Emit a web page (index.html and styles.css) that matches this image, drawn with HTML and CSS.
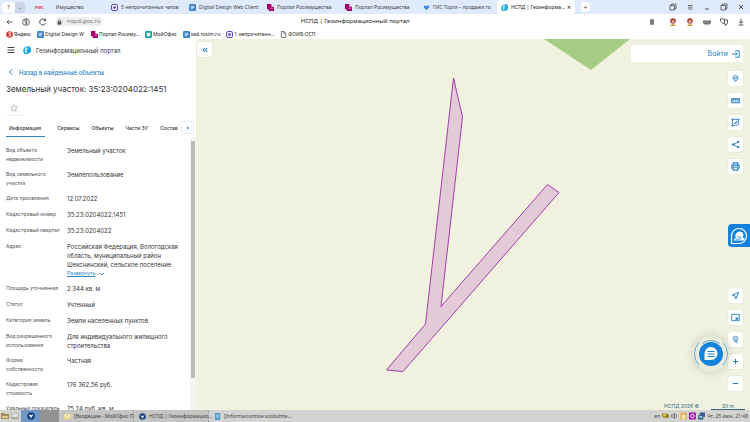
FILE: index.html
```html
<!DOCTYPE html>
<html lang="ru">
<head>
<meta charset="utf-8">
<title>НСПД | Геоинформационный портал</title>
<link rel="stylesheet" href="styles.css">
</head>
<body>
<svg class="defs" aria-hidden="true">
  <symbol id="purple" viewBox="0 0 8 8"><path fill="#a3006b" d="M0 0h5v3h3v5H2V6H0z"/><path fill="#d54b9b" d="M4 4h3v2H4z"/></symbol>
  <symbol id="doc" viewBox="0 0 8 8"><rect width="8" height="8" rx="1.5" fill="#3d82cf"/><path d="M2 2.5h4M2 4h4M2 5.5h3" stroke="#fff" stroke-width=".8"/></symbol>
  <symbol id="mail" viewBox="0 0 8 8"><rect x=".6" y=".6" width="6.8" height="6.8" rx="2" fill="#fff" stroke="#5b3fd0" stroke-width="1.2"/><circle cx="4" cy="4" r="1.5" fill="#4438d4"/></symbol>
  <symbol id="portal" viewBox="0 0 8 8"><path fill="#25a9dc" d="M2 1 6 0l2 2v4L5 8H1L0 4z"/><path fill="#a8e7f2" d="m2 2 3-.7L4 4v3H2z"/></symbol>
  <symbol id="person" viewBox="0 0 8 8"><circle cx="4" cy="3" r="2.8" fill="#a33a34"/><circle cx="4" cy="3.6" r="1.5" fill="#e5b18c"/><path d="M1 8q3-4 6 0z" fill="#c39a4b"/></symbol>
  <symbol id="windows" viewBox="0 0 8 8"><path d="M1 2.5h4.5V7H1zM2.5 2.5V1H7v4.5H5.5" fill="none" stroke="#333" stroke-width=".7"/></symbol>
  <symbol id="bird" viewBox="0 0 8 8"><circle cx="4" cy="4" r="3.8" fill="#173e7e"/><path d="M1.5 2.5 4 3.3l2.5-.8L4.6 5 4 6.8 3.4 5z" fill="#fff"/></symbol>
</svg>

<header class="browser">
  <nav class="tabs" aria-label="Вкладки">
    <div class="pins"><button class="pin">7</button><button class="pin-more">⌄</button></div>
    <a class="tab first" href="#"><b class="pmc">РМС</b><span>Имущество</span></a>
    <a class="tab" href="#"><svg><use href="#mail"/></svg><span>5 непрочитанных чатов</span></a>
    <a class="tab" href="#"><svg><use href="#doc"/></svg><span>Digital Design Web Client</span></a>
    <a class="tab" href="#"><svg><use href="#purple"/></svg><span>Портал Росимущества</span></a>
    <a class="tab" href="#"><svg><use href="#purple"/></svg><span>Портал Росимущества</span></a>
    <a class="tab" href="#"><svg viewBox="0 0 8 8"><path d="M1 2h6v2L4 7 1 4z" fill="#4b88dc"/></svg><span>ГИС Торги – продажи го</span></a>
    <a class="tab active" href="#"><svg><use href="#portal"/></svg><span>НСПД | Геоинформа...</span><i>×</i></a>
    <button class="plus" aria-label="Новая вкладка">+</button>
    <div class="window-actions">
      <button aria-label="Окна"><svg><use href="#windows"/></svg></button>
      <button aria-label="Меню"><svg viewBox="0 0 8 8"><path d="M2 2.5h4.5M2 4.2h4.5M2 6h4.5" stroke="#444" stroke-width=".7"/></svg></button>
      <button aria-label="Свернуть"><svg viewBox="0 0 8 8"><path d="M2 6h4" stroke="#333" stroke-width=".8"/></svg></button>
      <button aria-label="Развернуть окно"><svg><use href="#windows"/></svg></button>
      <button aria-label="Закрыть"><svg viewBox="0 0 8 8"><path d="m2 2 4 4m0-4L2 6" stroke="#222" stroke-width=".8"/></svg></button>
    </div>
  </nav>
  <div class="address-bar">
    <div class="nav-buttons">
      <button aria-label="Назад"><svg viewBox="0 0 8 8"><path d="M7.5 4H2m2-2L2 4l2 2" fill="none" stroke="#333" stroke-width=".8"/></svg></button>
      <button aria-label="Яндекс"><svg viewBox="0 0 8 8"><circle cx="4" cy="4" r="3.4" fill="none" stroke="#333" stroke-width=".7"/><path d="M4.7 6.5v-5q-2-.1-2 1.4 0 1.3 2 1.4L3 6.5" fill="none" stroke="#333" stroke-width=".7"/></svg></button>
      <button aria-label="Обновить"><svg viewBox="0 0 8 8"><path d="M6.5 5.2a3 3 0 1 1-.3-3M6.500.7v2H4.600" fill="none" stroke="#333" stroke-width=".9"/></svg></button>
    </div>
    <div class="url"><svg viewBox="0 0 8 8"><rect x="1.5" y="3.5" width="5" height="4" fill="#555"/><path d="M2.600 4V2.500a1.400 1.400 0 0 1 2.800 0V4" fill="none" stroke="#555"/></svg><span>nspd.gov.ru</span></div>
    <h1>НСПД | Геоинформационный портал</h1>
    <div class="extensions">
      <button aria-label="Закладка"><svg viewBox="0 0 8 8"><path d="M2 1.500h4V6.500H2z" fill="#999"/><path d="M2 2h4M2 4h4M2 6h4" stroke="#555" stroke-width=".8"/></svg></button>
      <button aria-label="Профиль 1"><svg><use href="#person"/></svg></button>
      <button aria-label="Профиль 2"><svg><use href="#person"/></svg></button>
      <button aria-label="Расширение"><svg viewBox="0 0 8 8"><path d="M0 2.500h8v2.300L6.500 6.500h-5L0 4.800z" fill="#6d6d74"/><path d="M1 4.500h6" stroke="#aaa" stroke-width=".7"/></svg></button>
      <button aria-label="Переводчик"><svg viewBox="0 0 8 8"><path d="M.5 1h4v5l-2-1-2-2zM4.500 2h3v3l-2 2.500V6" fill="none" stroke="#333" stroke-width=".8"/></svg></button>
      <button aria-label="Загрузки"><svg viewBox="0 0 8 8"><path d="M4 1v4M2 3.500l2 2 2-2M1.800 7h4.500" fill="none" stroke="#333" stroke-width=".9"/></svg></button>
    </div>
  </div>
  <nav class="bookmarks" aria-label="Закладки">
    <a href="#"><svg viewBox="0 0 8 8"><circle cx="4" cy="4" r="3.8" fill="#e3352e"/><path d="M5 6.500v-5q-2-.1-2 1.400 0 1.300 2 1.400L3 6.500" fill="none" stroke="#fff" stroke-width=".8"/></svg><span>Яндекс</span></a>
    <a class="wide" href="#"><svg><use href="#doc"/></svg><span>Digital Design W</span></a>
    <a class="wide" href="#"><svg><use href="#purple"/></svg><span>Портал Росиму...</span></a>
    <a href="#"><svg viewBox="0 0 8 8"><rect width="8" height="8" rx="1.5" fill="#16a3a2"/><path d="M2 2h4v4H2z" fill="#fff"/></svg><span>МойОфис</span></a>
    <a href="#"><svg><use href="#doc"/></svg><span>sed.rosim.ru</span></a>
    <a class="wide" href="#"><svg><use href="#mail"/></svg><span>1 непрочитанн...</span></a>
    <a href="#"><svg viewBox="0 0 8 8"><path d="M1.500.6h3l2 2v4.800h-5zM4.500.6v2h2" fill="none" stroke="#444" stroke-width=".8"/></svg><span>ФОИВ-ОСП</span></a>
  </nav>
</header>

<main class="workspace">
  <aside class="panel">
    <div class="brand">
      <button aria-label="Меню портала"><svg viewBox="0 0 8 8"><path d="M.5 1.500h7M.5 4h7M.5 6.500h7" stroke="#444"/></svg></button>
      <svg><use href="#portal"/></svg><span>Геоинформационный портал</span>
    </div>
    <a class="back" href="#"><svg viewBox="0 0 8 8"><path d="M5 1.500 2.500 4 5 6.500" fill="none" stroke="#2985c7"/></svg>Назад в найденные объекты</a>
    <h2>Земельный участок: 35:23:0204022:1451</h2>
    <button class="star" aria-label="В избранное"><svg viewBox="0 0 8 8"><path d="m4 .8 1 2.200 2.400.2-1.800 1.600.5 2.400L4 6 1.900 7.200l.5-2.400L.6 3.200 3 3z" fill="none" stroke="#999" stroke-width=".6"/></svg></button>
    <div class="section-tabs">
      <nav aria-label="Разделы"><a class="current" href="#">Информация</a><a href="#">Сервисы</a><a href="#">Объекты</a><a href="#">Части ЗУ</a><a href="#">Состав</a></nav>
      <button aria-label="Далее"><svg viewBox="0 0 8 8"><path d="M3 2.500 5 4 3 5.500z" fill="#2985c7"/></svg></button>
    </div>
    <div class="details">
      <dl>
        <div><dt>Вид объекта недвижимости</dt><dd>Земельный участок</dd></div>
        <div><dt>Вид земельного участка</dt><dd>Землепользование</dd></div>
        <div><dt>Дата присвоения</dt><dd>12.07.2022</dd></div>
        <div><dt>Кадастровый номер</dt><dd>35:23:0204022:1451</dd></div>
        <div><dt>Кадастровый квартал</dt><dd>35:23:0204022</dd></div>
        <div><dt>Адрес</dt><dd>Российская Федерация, Вологодская область, муниципальный район Шекснинский, сельское поселение<a class="expand" href="#">Развернуть<svg viewBox="0 0 8 8"><path d="m2 3 2 2 2-2" fill="none" stroke="#2985c7"/></svg></a></dd></div>
        <div><dt>Площадь уточненная</dt><dd>2 344 кв. м</dd></div>
        <div><dt>Статус</dt><dd>Учтенный</dd></div>
        <div><dt>Категория земель</dt><dd>Земли населенных пунктов</dd></div>
        <div><dt>Вид разрешенного использования</dt><dd>Для индивидуального жилищного строительства</dd></div>
        <div><dt>Форма собственности</dt><dd>Частная</dd></div>
        <div><dt>Кадастровая стоимость</dt><dd>176 362,56 руб.</dd></div>
        <div><dt>Удельный показатель</dt><dd>75,24 руб./кв. м</dd></div>
      </dl>
      <div class="scroll"><i></i></div>
    </div>
  </aside>
  <section class="map" aria-label="Карта">
    <svg class="canvas" viewBox="196 39 554 371" preserveAspectRatio="xMidYMid slice">
      <path d="M544 39h86l-39 31z" fill="#a5cd83"/>
      <path d="M453.500 78 462.500 117 441 306.500 547.500 184.500 559 192.500 403 371.500 386.500 370 425.500 324z" fill="#e3cad7" stroke="#a43eaa" stroke-linejoin="round"/>
    </svg>
    <button class="collapse" aria-label="Свернуть панель"><svg viewBox="0 0 8 8"><path d="M3.800 2 2 4l1.800 2M6.300 2 4.500 4l1.800 2" fill="none" stroke="#2380c3" stroke-width="1.100"/></svg></button>
    <div class="login"><a href="#">Войти<svg viewBox="0 0 10 10"><path d="M4 1h5v8H4M0 5h6.500M4.500 3l2 2-2 2" fill="none" stroke="#2380c3" stroke-width="1.200"/></svg></a></div>
    <div class="tools top">
      <button aria-label="Слои"><svg viewBox="0 0 10 10"><path d="m5 1.500 2.500 1.500v2.500L5 8.500 2.500 5.500V3z" fill="#c7e0f2" stroke="#3187c5" stroke-width=".9"/><path d="m2.500 3.500 2.500 1.500 2.500-1.500" fill="none" stroke="#3187c5" stroke-width=".8"/></svg></button>
      <button aria-label="Линейка"><svg viewBox="0 0 10 10"><path d="M.8 3h8.400v4.500H.8zM2.800 3v2M5 3v2M7.200 3v2" fill="#c7e0f2" stroke="#287fbe" stroke-width="1.200"/></svg></button>
      <button aria-label="Выделение"><svg viewBox="0 0 10 10"><path d="M1.500.5v9M.5 1.500h9M8.500.5V5M.5 8.500H5M3 7l4-4" fill="none" stroke="#287fbe"/><circle cx="7" cy="6.500" r="1.700" fill="#fff" stroke="#287fbe" stroke-width=".8"/></svg></button>
      <button aria-label="Поделиться"><svg viewBox="0 0 10 10"><path d="M8 2 2.500 5 8 8" fill="none" stroke="#287fbe"/><g fill="#287fbe"><circle cx="8" cy="2" r="1.200"/><circle cx="2.500" cy="5" r="1.300"/><circle cx="8" cy="8" r="1.200"/></g></svg></button>
      <button aria-label="Печать"><svg viewBox="0 0 10 10"><path d="M2.500 3.500V1h5v2.500M2.500 7H1V3.500h8V7H7.500M2.500 5.500h5V9h-5z" fill="none" stroke="#287fbe" stroke-width="1.200"/></svg></button>
    </div>
    <button class="assistant" aria-label="Помощник"><svg viewBox="0 0 18 18"><path d="M1.500 16.500V9A7.500 7.500 0 1 1 9 16.500z" fill="none" stroke="#fff" stroke-width="1.200"/><path d="M3.500 13.500q.5-2 2.500-3L5 8.500 6.500 6q3-2.500 6-.5l1 2.500-.8 2 2.300 2-1.500 1.500z" fill="#fff"/><path d="M7 9q2 2 4 1M5.500 12q3 1 6-.5" fill="none" stroke="#1480df" stroke-width=".8"/></svg></button>
    <div class="tools bottom">
      <button aria-label="Местоположение"><svg viewBox="0 0 10 10"><path d="M1.500 4.500 8.500 1.500l-3 7-1.200-2.800z" fill="none" stroke="#287fbe" stroke-width="1.100"/></svg></button>
      <button aria-label="Обзорная карта"><svg viewBox="0 0 10 10"><path d="M.8 1.500h8.400v7H.8z" fill="none" stroke="#287fbe"/><path d="M5 5h3v2.500H5z" fill="#287fbe"/></svg></button>
      <button aria-label="Точка"><svg viewBox="0 0 10 10"><circle cx="5" cy="4" r="2.600" fill="#c7e0f2" stroke="#4c8fc0" stroke-width=".9"/><path d="M3.500 6.500 7 9M5 4l2 4" stroke="#4c8fc0"/></svg></button>
      <button aria-label="Увеличить"><svg viewBox="0 0 10 10"><path d="M5 2v6M2 5h6" stroke="#287fbe" stroke-width="1.100"/></svg></button>
      <button aria-label="Уменьшить"><svg viewBox="0 0 10 10"><path d="M2 5h6" stroke="#287fbe" stroke-width="1.100"/></svg></button>
    </div>
    <button class="chat" aria-label="Чат"><svg viewBox="0 0 36 36"><circle cx="18" cy="18" r="12" fill="#1484dc"/><path d="M6 6.500a17 17 0 0 0 0 23M30 6.500a17 17 0 0 1 0 23M9.500 7.500a13.500 13.500 0 0 1 17 0" fill="none" stroke="#579dce" stroke-width=".9"/><path d="M11.500 24v-6a6.500 6.500 0 1 1 6.500 6z" fill="#fff"/><path d="M14.500 15.500h7M14.500 18h7M14.500 20.500h7" stroke="#1484dc" stroke-width="1.200"/></svg></button>
    <div class="scale"><span>НСПД 2026 ©</span><span class="ruler">20 m</span></div>
  </section>
</main>

<footer class="taskbar">
  <button class="quick" aria-label="Файлы"><svg viewBox="0 0 8 8"><path d="M0 1h3l1 1h4v5H0z" fill="#a78854"/><path d="M1 4h6v2H1z" fill="#e1cb9d"/></svg></button>
  <button class="quick" aria-label="Рабочий стол"><svg viewBox="0 0 8 8"><path d="M.5 1h7v5.500h-7z" fill="#ddd" stroke="#999" stroke-width=".5"/><path d="M1 6h6" stroke="#81964c"/></svg></button>
  <button class="launcher" aria-label="Браузер"><svg><use href="#bird"/></svg></button>
  <button class="pager" aria-label="Рабочий стол 2"></button>
  <button class="task"><svg viewBox="0 0 8 8"><path d="M0 1h8v6H0z" fill="#ecdc92"/><path d="m1 2 3 2.500L7 2" fill="none" stroke="#fff"/></svg><span>[Входящие - МойОфис П...</span></button>
  <button class="task"><svg><use href="#bird"/></svg><span>НСПД | Геоинформацио...</span></button>
  <button class="task plain"><svg viewBox="0 0 8 8"><path d="M1 0h6v8H1z" fill="#549dc7"/><path d="M2.500 2.500h3M2.500 4.500h3" stroke="#d5ecf7"/></svg><span>[Informacionnoe soobshhe...</span></button>
  <div class="tray"><span>en</span>
    <svg viewBox="0 0 8 8"><path d="M0 1h6l2 2v3H2L0 4z" fill="#8e8130"/><circle cx="3" cy="3" r="1.600" fill="#e7cf3b"/></svg>
    <svg viewBox="0 0 8 8"><path d="M0 3h2l2-2v6L2 5H0zM5.500 2q2 2 0 4" fill="none" stroke="#555" stroke-width=".9"/></svg>
    <svg viewBox="0 0 8 8"><path d="M1 0h7v8H0V2z" fill="#e5b765"/><path d="M2 3h4v4H2z" fill="#f5ead0"/></svg>
    <svg viewBox="0 0 8 8"><rect width="8" height="8" rx="1" fill="#a316ae"/><circle cx="4" cy="4" r="2" fill="none" stroke="#fff"/></svg>
    <svg viewBox="0 0 8 8"><path d="M2 0h6v5H6v3H0V3h2z" fill="#365d94"/><path d="M1 4h4v2H1z" fill="#9cc5e6"/></svg>
    <time>Чт, 25 июн, 21:48</time>
  </div>
</footer>
</body>
</html>
```

FILE: styles.css
```css
* { box-sizing: border-box; }
body {
  margin: 0;
  height: 100vh;
  display: flex;
  flex-direction: column;
  overflow: hidden;
  background: #fff;
  color: #333;
  font: 6px/9px Inter, "Noto Sans", sans-serif;
}
button { margin: 0; padding: 0; border: 0; background: none; color: inherit; font: inherit; display: grid; place-items: center; }
a { color: inherit; text-decoration: none; }
svg { width: 8px; height: 8px; flex: none; display: block; }
.defs { position: absolute; width: 0; height: 0; }
span { white-space: nowrap; }

.browser { flex: none; font-family: "Noto Sans", sans-serif; font-size: 5px; }
.tabs { display: flex; align-items: center; height: 14px; background: #dfeafb; color: #444; }
.pins { display: flex; align-items: center; width: 29px; padding-left: 2px; }
.pin { width: 13px; height: 11px; border-radius: 3px; background: #fff; }
.pin-more { width: 10px; height: 11px; background: #ccd6e5; border-radius: 0 3px 3px 0; }
.tab { flex: 0 1 78px; min-width: 0; height: 14px; display: flex; align-items: center; gap: 3px; padding: 0 4px; }
.tab span { flex: 1; min-width: 0; }
.tab svg { width: 7px; height: 7px; }
.first { gap: 12px; padding-left: 6px; }
.pmc { color: #d33d4c; font-size: 4px; }
.active { background: #fff; border-radius: 3px; color: #222; }
.active i { font-style: normal; font-size: 7px; }
.plus { width: 9px; height: 10px; margin-left: 6px; border-radius: 3px; background: #fff; font-size: 7px; }
.window-actions { display: flex; gap: 9px; margin-left: auto; padding-right: 5px; }

.address-bar { display: flex; align-items: center; height: 15px; padding: 0 5px; }
.address-bar h1 { flex: 1; margin: 0; padding-right: 40px; text-align: center; font-size: 6px; font-weight: 400; color: #222; }
.nav-buttons { display: flex; gap: 9px; }
.url { display: flex; align-items: center; gap: 4px; margin-left: 9px; padding: 0 2px 0 0; border-radius: 3px; background: #eee; color: #777; font-size: 6px; }
.url svg { width: 7px; height: 6px; }
.extensions { display: flex; gap: 9px; }
.extensions button:first-child { margin-right: 4px; }
.bookmarks { display: flex; align-items: center; gap: 6px; height: 10px; padding-left: 6px; color: #222; }
.bookmarks a { display: flex; align-items: center; gap: 1px; }
.bookmarks svg { width: 7px; height: 7px; }
.bookmarks .wide { width: 48px; }

.workspace { flex: 1; min-height: 0; display: grid; grid-template-columns: 196px 1fr; }
.panel { min-height: 0; display: flex; flex-direction: column; align-items: flex-start; overflow: hidden; }
.brand { display: flex; align-items: center; gap: 8px; height: 22px; padding-left: 7px; color: #333; }
.brand span { margin-left: -3px; }
.back { display: flex; align-items: center; gap: 4px; height: 22px; padding-left: 7px; color: #2985c7; font-weight: 500; }
.panel h2 { margin: 0; padding-left: 6px; font-size: 8px; line-height: 12px; font-weight: 400; }
.star { width: 16px; height: 16px; margin: 5px 0 5px 6px; border-bottom: 1px solid #eee; }
.section-tabs { display: flex; width: 100%; height: 16px; padding-left: 6px; }
.section-tabs nav { flex: 1; min-width: 0; display: flex; gap: 12px; font-size: 5px; line-height: 15px; font-weight: 500; }
.section-tabs nav a { flex: none; }
.section-tabs .current { padding: 0 4px 0 3px; border-bottom: 1px solid #2985c7; }
.section-tabs button { width: 13px; height: 13px; margin-right: 2px; border: 1px solid #e8eef2; border-radius: 2px; }
.details { flex: 1; min-height: 0; width: 100%; display: flex; overflow: hidden; }
dl { flex: 1; margin: 0; padding: 9px 4px 0 6px; }
dl > div { display: grid; grid-template-columns: 55px 1fr; column-gap: 6px; min-height: 10px; margin-bottom: 6px; }
dt { font-size: 5px; color: #555; }
dd { margin: 0; }
.expand { display: flex; align-items: center; gap: 3px; color: #2985c7; font-size: 5px; text-decoration: underline; }
.scroll { width: 6px; padding: 4px 1px 32px; background: #f4f4f4; }
.scroll i { display: block; height: 100%; background: #bbb; }

.map { position: relative; overflow: hidden; background: #f0f1df; color: #287fbe; }
.canvas { position: absolute; inset: 0; width: 100%; height: 100%; }
.collapse, .tools button { width: 15px; height: 15px; background: #fff; border-radius: 2px; box-shadow: 0 0 1px #b8c7ce; }
.collapse { position: absolute; left: 1px; top: 3px; }
.login { position: absolute; top: 6px; right: 7px; width: 112px; height: 17px; padding: 0 3px; background: #fff; border-radius: 2px; display: flex; align-items: center; justify-content: flex-end; font-size: 7px; }
.login a { display: flex; align-items: center; gap: 4px; }
.tools { position: absolute; right: 7px; display: grid; gap: 7px; }
.tools svg { width: 9px; height: 9px; }
.top { top: 32px; }
.bottom { bottom: 19px; }
.assistant { position: absolute; right: 0; top: 185px; width: 22px; height: 23px; border-radius: 4px 0 0 4px; background: #1480df; }
.assistant svg { width: 18px; height: 18px; }
.chat { position: absolute; right: 21px; bottom: 38px; width: 36px; height: 36px; border-radius: 50%; box-shadow: 0 0 8px #c9ccb8; background: #e9ecdc; }
.chat svg { width: 36px; height: 36px; }
.scale { position: absolute; right: 5px; bottom: 0; display: flex; gap: 12px; font-size: 5px; line-height: 6px; color: #356783; }
.ruler { width: 34px; border-bottom: 1px solid #356783; text-align: center; }

.taskbar { flex: none; display: flex; align-items: center; height: 12px; background: #d3d3d1; font-family: "Noto Sans", sans-serif; font-size: 5px; color: #444; }
.quick { width: 10px; }
.launcher { width: 19px; height: 12px; margin-left: 1px; background: #7098c8; }
.pager { width: 19px; height: 12px; background: #929292; }
.task { display: flex; align-items: center; justify-content: flex-start; gap: 3px; width: 75px; height: 12px; padding-left: 5px; background: #c5c5c3; border-right: 1px solid #aaa; }
.task svg { width: 7px; height: 7px; }
.plain { width: 90px; background: none; border: 0; }
.tray { display: flex; align-items: center; gap: 2px; margin-left: auto; padding-right: 2px; }
.tray svg { width: 7px; height: 8px; }
```
